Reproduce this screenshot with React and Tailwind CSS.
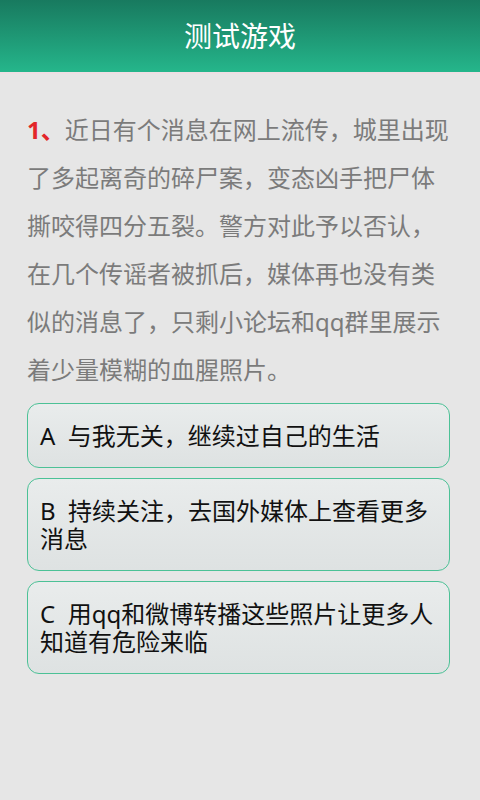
import React from 'react';

const font = { fontFamily: '"Noto Sans", "Noto Sans CJK SC", sans-serif' };

const options = [
  { key: 'A', text: '与我无关，继续过自己的生活' },
  { key: 'B', text: '持续关注，去国外媒体上查看更多消息' },
  { key: 'C', text: '用qq和微博转播这些照片让更多人知道有危险来临' },
];

const App = () => {
  return (
    <div className="w-[480px] h-[800px] bg-[#e6e6e6] flex flex-col" style={font}>
      <div className="h-[72px] bg-gradient-to-b from-[#187a5f] to-[#25b68b] flex items-center justify-center">
        <h1 className="text-white text-[28px] leading-none">测试游戏</h1>
      </div>
      <div className="h-[2px] bg-[#eedfe4]"></div>

      <div className="px-[27px] pt-[32px]">
        <p className="text-[24px] leading-[48px] text-[#7b7b7b]">
          <span className="text-[#e3262a] font-bold">1、</span>
          近日有个消息在网上流传，城里出现了多起离奇的碎尸案，变态凶手把尸体撕咬得四分五裂。警方对此予以否认，在几个传谣者被抓后，媒体再也没有类似的消息了，只剩小论坛和qq群里展示着少量模糊的血腥照片。
        </p>

        <div className="mt-[9px] flex flex-col gap-[10px] pr-[3px]">
          {options.map((o) => (
            <div
              key={o.key}
              className="rounded-[12px] border border-[#4cc196] bg-gradient-to-b from-[#e9ecec] to-[#dee2e2] pl-[12px] pr-[10px] pt-[18px] pb-[17px] text-[24px] leading-[28px] text-[#111111]"
            >
              {o.key}&nbsp;&nbsp;{o.text}
            </div>
          ))}
        </div>
      </div>
    </div>
  );
};

export default App;
